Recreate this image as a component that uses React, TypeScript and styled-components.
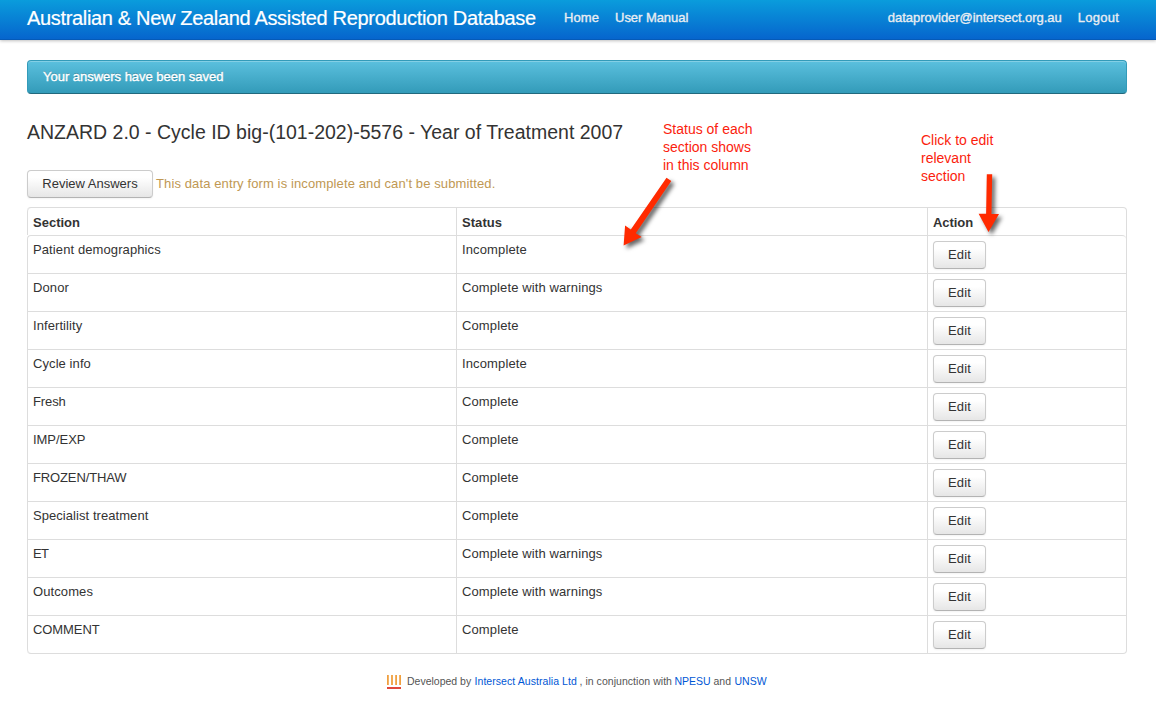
import React from 'react';
import styled, { createGlobalStyle } from 'styled-components';

const GlobalStyle = createGlobalStyle`
  *, *::before, *::after { box-sizing: border-box; }
  body {
    margin: 0;
    background: #fff;
    color: #333;
    font: 13px/18px "Liberation Sans", Arial, sans-serif;
  }
`;

interface Tracked {
  $track?: number;
}

const Page = styled.div`
  position: relative;
  width: 1156px;
  height: 712px;
  overflow: hidden;
`;

const Navbar = styled.header`
  display: flex;
  align-items: flex-start;
  height: 40px;
  padding: 8px 37px 0 27px;
  background: linear-gradient(to bottom, #0a9cdc, #0664cd);
  box-shadow: 0 1px 3px rgba(0, 0, 0, 0.25), inset 0 -1px 0 rgba(0, 0, 0, 0.1);
`;

const Brand = styled.a`
  width: 537px;
  color: #fff;
  font-size: 20px;
  line-height: 20px;
  letter-spacing: -0.33px;
  white-space: nowrap;
  -webkit-text-stroke: 0.2px #fff;
`;

const NavGroup = styled.nav<{ $end?: boolean }>`
  display: flex;
  gap: 16px;
  margin-top: 1px;
  margin-left: ${(p) => (p.$end ? 'auto' : '0')};
`;

const NavLink = styled.a<Tracked>`
  color: #e9edf2;
  letter-spacing: ${(p) => p.$track ?? 0}px;
  -webkit-text-stroke: 0.35px #e9edf2;
  white-space: nowrap;
`;

const Main = styled.main`
  padding: 20px 29px 0 27px;
`;

const Alert = styled.div`
  height: 34px;
  padding: 7px 15px;
  border: 1px solid;
  border-color: #339bb9 #339bb9 #22697d;
  border-radius: 4px;
  background: linear-gradient(to bottom, #5bc0de, #339bb9);
  box-shadow: inset 0 1px 0 rgba(255, 255, 255, 0.25);
  color: #fff;
  letter-spacing: -0.02px;
  text-shadow: 0 -1px 0 rgba(0, 0, 0, 0.25);
  -webkit-text-stroke: 0.35px #fff;
`;

const Title = styled.h3`
  margin: 25px 0 0;
  color: #333;
  font-size: 19.5px;
  font-weight: normal;
  line-height: 27px;
`;

const ReviewBar = styled.div`
  display: flex;
  align-items: center;
  gap: 3px;
  margin: 24px 0 9px;
`;

const Button = styled.button<Tracked>`
  display: block;
  height: 28px;
  padding: 0 0 1px;
  border: 1px solid #ccc;
  border-bottom-color: #b3b3b3;
  border-radius: 4px;
  background: linear-gradient(to bottom, #fff, #fff 25%, #e6e6e6);
  box-shadow: inset 0 1px 0 rgba(255, 255, 255, 0.2), 0 1px 2px rgba(0, 0, 0, 0.05);
  color: #333;
  font: inherit;
  letter-spacing: ${(p) => p.$track ?? 0}px;
`;

const ReviewButton = styled(Button)`
  width: 126px;
`;

const EditButton = styled(Button)`
  width: 53px;
`;

const Warning = styled.span`
  color: #c09853;
  letter-spacing: 0.115px;
`;

const Table = styled.table`
  width: 1100px;
  table-layout: fixed;
  border: 1px solid #ddd;
  border-left: 0;
  border-radius: 4px;
  border-spacing: 0;
  border-collapse: separate;
`;

const Column = styled.col<{ $width: number }>`
  width: ${(p) => p.$width}px;
`;

const HeadCell = styled.th<Tracked>`
  height: 27px;
  padding: 6px 5px 3px;
  border-left: 1px solid #ddd;
  font-weight: bold;
  text-align: left;
  letter-spacing: ${(p) => p.$track ?? 0}px;

  &:first-child { border-top-left-radius: 4px; }
`;

const Cell = styled.td<Tracked>`
  height: 38px;
  padding: 5px 5px 4px;
  border-top: 1px solid #ddd;
  border-left: 1px solid #ddd;
  vertical-align: top;
  letter-spacing: ${(p) => p.$track ?? 0}px;

  tr:first-child > &:first-child { border-top-left-radius: 4px; }
  tr:first-child > &:last-child { border-top-right-radius: 4px; }
  tr:last-child > &:first-child { border-bottom-left-radius: 4px; }
`;

const Footer = styled.footer`
  display: flex;
  align-items: flex-start;
  margin: 18px 0 0 360px;
  color: #555;
  font-size: 10.5px;
  white-space: pre;
`;

const Logo = styled.svg`
  width: 15px;
  height: 15px;
  margin: 2px 5px 0 0;
`;

const FooterText = styled.span<Tracked & { $width: number }>`
  width: ${(p) => p.$width}px;
  letter-spacing: ${(p) => p.$track ?? 0}px;
`;

const FooterLink = styled(FooterText)`
  color: #0057d5;
`;

const Note = styled.p<{ $left: number; $top: number }>`
  position: absolute;
  left: ${(p) => p.$left}px;
  top: ${(p) => p.$top}px;
  margin: 0;
  color: #fb1d0d;
  font-size: 14px;
  line-height: 18px;
  white-space: pre-line;
`;

const Arrows = styled.svg`
  position: absolute;
  left: 600px;
  top: 160px;
  width: 430px;
  height: 110px;
  pointer-events: none;
`;

const ArrowShape = styled.path`
  fill: #ff2a00;
  filter: drop-shadow(3px 3px 2px rgba(0, 0, 0, 0.6));
`;

const rows: { section: string; track: number; status: string }[] = [
  { section: 'Patient demographics', track: 0.1, status: 'Incomplete' },
  { section: 'Donor', track: 0.1, status: 'Complete with warnings' },
  { section: 'Infertility', track: 0.08, status: 'Complete' },
  { section: 'Cycle info', track: 0.08, status: 'Incomplete' },
  { section: 'Fresh', track: -0.1, status: 'Complete' },
  { section: 'IMP/EXP', track: -0.05, status: 'Complete' },
  { section: 'FROZEN/THAW', track: -0.13, status: 'Complete' },
  { section: 'Specialist treatment', track: 0.06, status: 'Complete' },
  { section: 'ET', track: -0.6, status: 'Complete with warnings' },
  { section: 'Outcomes', track: 0.1, status: 'Complete with warnings' },
  { section: 'COMMENT', track: -0.08, status: 'Complete' },
];

const statusTrack: Record<string, number> = {
  Incomplete: 0.13,
  Complete: 0.12,
  'Complete with warnings': 0.11,
};

export default function App() {
  return (
    <Page>
      <GlobalStyle />
      <Navbar>
        <Brand>Australian &amp; New Zealand Assisted Reproduction Database</Brand>
        <NavGroup>
          <NavLink $track={0.1}>Home</NavLink>
          <NavLink $track={-0.05}>User Manual</NavLink>
        </NavGroup>
        <NavGroup $end>
          <NavLink $track={-0.04}>dataprovider@intersect.org.au</NavLink>
          <NavLink $track={0.25}>Logout</NavLink>
        </NavGroup>
      </Navbar>

      <Main>
        <Alert>Your answers have been saved</Alert>
        <Title>ANZARD 2.0 - Cycle ID big-(101-202)-5576 - Year of Treatment 2007</Title>
        <ReviewBar>
          <ReviewButton>Review Answers</ReviewButton>
          <Warning>This data entry form is incomplete and can't be submitted.</Warning>
        </ReviewBar>

        <Table>
          <colgroup>
            <Column $width={429} />
            <Column $width={471} />
            <Column $width={199} />
          </colgroup>
          <thead>
            <tr>
              <HeadCell>Section</HeadCell>
              <HeadCell $track={0.05}>Status</HeadCell>
              <HeadCell $track={-0.05}>Action</HeadCell>
            </tr>
          </thead>
          <tbody>
            {rows.map((row) => (
              <tr key={row.section}>
                <Cell $track={row.track}>{row.section}</Cell>
                <Cell $track={statusTrack[row.status]}>{row.status}</Cell>
                <Cell>
                  <EditButton $track={0.2}>Edit</EditButton>
                </Cell>
              </tr>
            ))}
          </tbody>
        </Table>

        <Footer>
          <Logo viewBox="0 0 15 15">
            <path d="M0 1h1.8v10H0zM4.1 1h1.8v10H4.1zM8.2 1h1.8v10H8.2zM12.2 1H14v10h-1.8z" fill="#f0a040" />
            <path d="M0 13h14v2H0z" fill="#e0483c" />
          </Logo>
          <FooterText $width={67.5}>Developed by</FooterText>
          <FooterLink $width={105} $track={0.06}>Intersect Australia Ltd</FooterLink>
          <FooterText $width={95} $track={0.04}>, in conjunction with</FooterText>
          <FooterLink $width={39}>NPESU</FooterLink>
          <FooterText $width={21}>and</FooterText>
          <FooterLink $width={34}>UNSW</FooterLink>
        </Footer>
      </Main>

      <Note $left={663} $top={120}>{'Status of each\nsection shows\nin this column'}</Note>
      <Note $left={921} $top={131}>{'Click to edit\nrelevant\nsection'}</Note>
      <Arrows viewBox="600 160 430 110">
        <ArrowShape d="M666.5 177.8l4.8 3.1L635.8 233.2l5.9 3.8L623.6 245.6l1.5-20.2 5.7 4.2z" />
        <ArrowShape d="M986.8 174.2h5.4L991.5 214h7.5L988.5 232 978.6 213.8h7.5z" />
      </Arrows>
    </Page>
  );
}
